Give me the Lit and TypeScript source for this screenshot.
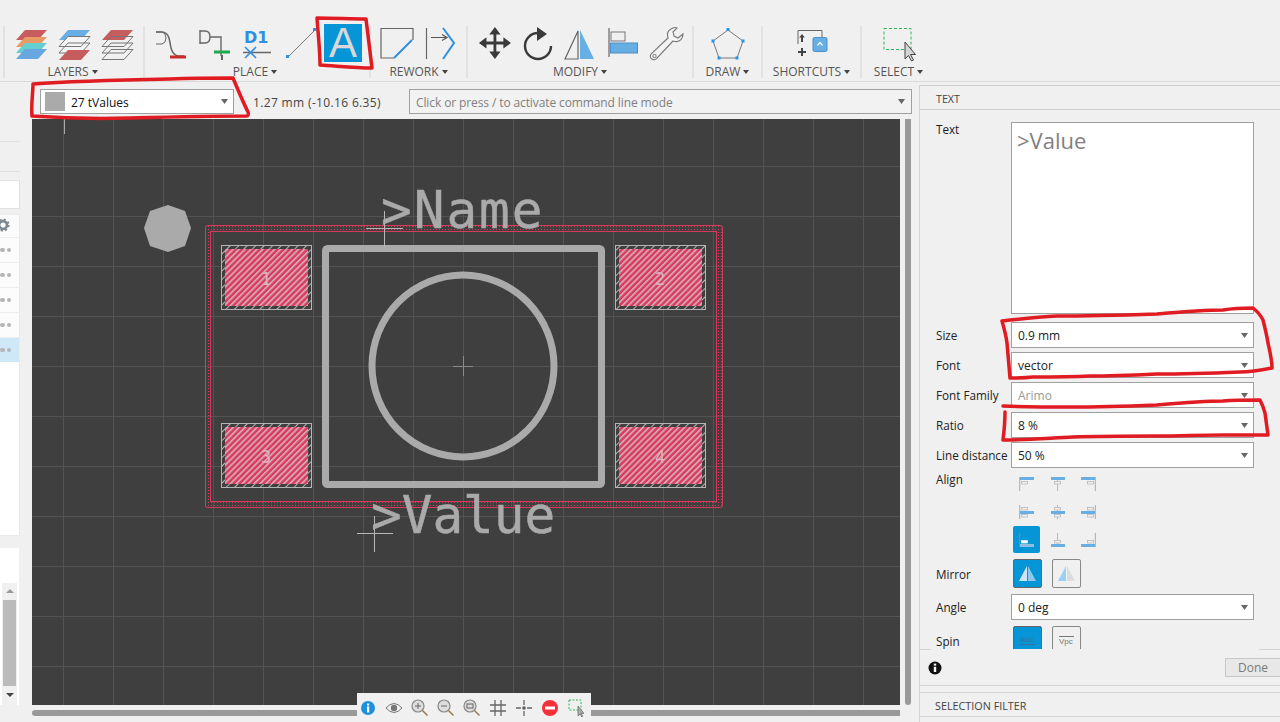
import { LitElement, html, css, svg } from "lit";
import { customElement } from "lit/decorators.js";

const B = "#66aee4";
const icons: Record<string, any> = {
  l1: svg`<svg width="36" height="34" viewBox="0 0 36 34"><g transform="translate(3 -4)"><path d="M9 6h22l-9 10H0z" fill="#c65c5e"/><path d="M9 13h22l-9 10H0z" fill="#e79a63"/><path d="M9 19h22l-9 10H0z" fill="#66cdd0"/><path d="M9 25h22l-9 10H0z" fill="#67a6de"/></g></svg>`,
  l2: svg`<svg width="36" height="34" viewBox="0 0 36 34"><g transform="translate(3 -4)"><path d="M9 6h22l-9 10H0z" fill="#67aee4"/><path d="M9 12.500h22l-9 10H0zM9 19h22l-9 10H0z" fill="#f4f4f4" stroke="#777"/><path d="M9 26h22l-9 10H0z" fill="#c65c5e"/></g></svg>`,
  l3: svg`<svg width="36" height="34" viewBox="0 0 36 34"><g transform="translate(3 -4)"><path d="M9 6h22l-9 10H0z" fill="#c65c5e"/><path d="M9 12.500h22l-9 10H0zM9 19h22l-9 10H0zM9 25.500h22l-9 10H0z" fill="none" stroke="#777"/></g></svg>`,
  wire: svg`<svg width="36" height="34" viewBox="0 0 36 34"><path d="M3 4h6q5 0 7 6q1 4 2 10q2 7 7 8h6" fill="none" stroke="#666" stroke-width="1.500"/><path d="M3 4h6q4 1 4 6t-4 6H3" fill="none" stroke="#666"/><path d="M17 29h16" stroke="#cc2b2b" stroke-width="3"/></svg>`,
  net: svg`<svg width="36" height="34" viewBox="0 0 36 34"><path d="M4 2v14M4 3h5q5 0 5 6t-5 6H4M14 9h11v19" fill="none" stroke="#666" stroke-width="1.400"/><path d="M18 24h16" stroke="#1fa84f" stroke-width="3"/><path d="M26 27v5" stroke="#666" stroke-width="2"/></svg>`,
  dv: svg`<svg width="36" height="34" viewBox="0 0 36 34"><path d="M4 24.500h28" stroke="#666" stroke-width="1.500"/><path d="M6 19l11 11M17 19L6 30" stroke="#2f8fe0" stroke-width="1.600"/><text x="5" y="15" fill="#2f8fe0" font-family="'DejaVu Sans',sans-serif" font-weight="700" font-size="16">D1</text></svg>`,
  line: svg`<svg width="36" height="34" viewBox="0 0 36 34"><path d="M6 29L32 3" stroke="#777" stroke-width="1"/><rect x="4" y="27" width="3" height="3" fill="#2f8fe0"/><rect x="31" y="0" width="3" height="3" fill="#2f8fe0"/></svg>`,
  a: html`<div class="a-btn">A</div>`,
  rw1: svg`<svg width="36" height="34" viewBox="0 0 36 34"><path d="M15 30H2V0.500h32V12" fill="none" stroke="#666" stroke-width="1.200"/><path d="M15 30l18-18" fill="none" stroke="#2f8fe0" stroke-width="2"/></svg>`,
  rw2: svg`<svg width="36" height="34" viewBox="0 0 36 34"><path d="M4.500 0v31" stroke="#666" stroke-width="1.200"/><path d="M9 9.500h15M20 6.500l5 3-5 3" fill="none" stroke="#555" stroke-width="1.200"/><path d="M21 0l11 15-11 16" fill="none" stroke="#2f8fe0" stroke-width="2"/></svg>`,
  move: svg`<svg width="36" height="34" viewBox="0 0 36 34"><path transform="translate(2 -1) scale(.94)" d="M18 0l6 8h-4.500v7.500H27V11l8 6-8 6v-4.500h-7.500V26H24l-6 8-6-8h4.500v-7.500H9V23l-8-6 8-6v4.500h7.500V8H12z" fill="#3a3a3a"/></svg>`,
  rot: svg`<svg width="36" height="34" viewBox="0 0 36 34"><path d="M19 5A13 13 0 1 0 32 18" fill="none" stroke="#3a3a3a" stroke-width="2.400"/><path d="M17 -2l10 7-10 7z" fill="#3a3a3a" transform="translate(1 1)"/></svg>`,
  mir: svg`<svg width="36" height="34" viewBox="0 0 36 34"><path d="M16 3L3 31h13z" fill="none" stroke="#666" stroke-width="1.200"/><path d="M18 2v29h14z" fill="${B}"/></svg>`,
  ali: svg`<svg width="36" height="34" viewBox="0 0 36 34"><path d="M4 0v29" stroke="#666" stroke-width="1.200"/><rect x="6" y="4" width="14" height="9" fill="none" stroke="#777"/><rect x="5.500" y="15" width="27" height="10" fill="${B}" stroke="#4a8fc7"/></svg>`,
  wr: svg`<svg width="36" height="34" viewBox="0 0 36 34"><path d="M23 1q-5 3-3 9L3 26q-2 3 1 5t5-1l16-17q6 2 9-3q1-2 1-4l-5 4-4-2-1-4 4-4q-2-1-4 0z" fill="#f4f4f4" stroke="#777" stroke-width="1.100"/><circle cx="6.500" cy="28" r="1.700" fill="none" stroke="#777"/></svg>`,
  pen: svg`<svg width="36" height="34" viewBox="0 0 36 34"><path d="M18 2L33 13l-6 17H9L3 13z" fill="none" stroke="#777" stroke-width="1"/><g fill="#1f96ea"><rect x="16.500" y="0" width="3" height="3"/><rect x="31.500" y="11.500" width="3" height="3"/><rect x="1.500" y="11.500" width="3" height="3"/><rect x="7.500" y="28.500" width="3" height="3"/><rect x="25.500" y="28.500" width="3" height="3"/></g></svg>`,
  sc: svg`<svg width="36" height="34" viewBox="0 0 36 34"><path d="M28 9V2.500H4V16" fill="none" stroke="#666"/><path d="M8 6l-2.800 3.500h1.800V14h2V9.500h1.800z" fill="#444"/><rect x="19" y="9.500" width="14" height="14" rx="1.500" fill="${B}" stroke="#4a8fc7"/><path d="M23.500 17.500l2.500-3 2.500 3" fill="none" stroke="#fff" stroke-width="1.200"/><path d="M8 20v8M4 24h8" stroke="#444" stroke-width="2"/></svg>`,
  sel: svg`<svg width="36" height="34" viewBox="0 0 36 34"><rect x="3" y="0.500" width="27" height="21" fill="none" stroke="#2fb457" stroke-dasharray="3 2"/><path d="M24 14v17l3.500-3.500 3 5.500 2-1-3-5.500h5z" fill="#d5d5d5" stroke="#444" stroke-width="1"/></svg>`,
};

const groups = [
  { w: 140, lo: 3, label: "LAYERS", items: ["l1", "l2", "l3"] },
  { w: 226, lo: 4, label: "PLACE", items: ["wire", "net", "dv", "line", "a"] },
  { w: 97, lo: 0, label: "REWORK", items: ["rw1", "rw2"] },
  { w: 226, lo: 0, label: "MODIFY", items: ["move", "rot", "mir", "ali", "wr"] },
  { w: 69, lo: 0, label: "DRAW", items: ["pen"] },
  { w: 99, lo: 0, label: "SHORTCUTS", items: ["sc"] },
  { w: 75, lo: 0, label: "SELECT", items: ["sel"] },
];

const gridX = Array.from({ length: 18 }, (_, i) => 63 + i * 50);
const gridY = Array.from({ length: 12 }, (_, i) => 166 + i * 50);

const pads = [
  { x: 222, y: 246, n: "1" },
  { x: 616, y: 246, n: "2" },
  { x: 222, y: 424, n: "3" },
  { x: 616, y: 424, n: "4" },
];

function board() {
  return svg`
  <svg class="board" width="868" height="586" viewBox="32 119 868 586">
    <defs>
      <pattern id="pad" width="4.200" height="4.200" patternUnits="userSpaceOnUse" patternTransform="rotate(-45)">
        <rect width="4.200" height="4.200" fill="#d83a5e"/><rect width="4.200" height="1.900" fill="#d9a2b0"/>
      </pattern>
      <pattern id="halo" width="6" height="6" patternUnits="userSpaceOnUse" patternTransform="rotate(-45)">
        <rect width="6" height="1" fill="#b5b5b5"/>
      </pattern>
      <pattern id="dots" width="3" height="3" patternUnits="userSpaceOnUse">
        <rect width="1" height="1" x="1" y="1" fill="#d83a5e"/>
      </pattern>
    </defs>
    <rect x="32" y="119" width="868" height="586" fill="#3f3f3f"/>
    ${gridX.map((x) => svg`<path d="M${x + 0.5} 119V705" stroke="#535353" />`)}
    ${gridY.map((y) => svg`<path d="M32 ${y + 0.5}H900" stroke="#535353" />`)}
    <path d="M64.500 119v15" stroke="#aaa"/>
    <polygon points="168,205 185,211 191,228 185,246 168,252 150,246 144,228 150,211" fill="#aaa"/>
    <path d="M205.500 225.500H722.500V507.500H205.500Z M210.500 231.500V501.500H716.500V231.500Z" fill="url(#dots)"/>
    <rect x="205.500" y="225.500" width="517" height="282" rx="2" fill="none" stroke="#d83a5e"/>
    <rect x="210.500" y="231.500" width="506" height="270" fill="none" stroke="#d83a5e"/>
    ${pads.map(
      (p) => svg`
      <rect x="${p.x - 0.5}" y="${p.y - 0.5}" width="90" height="64" fill="url(#halo)" stroke="#b5b5b5"/>
      <rect x="${p.x + 3}" y="${p.y + 3}" width="83" height="57" fill="url(#pad)"/>
      <text x="${p.x + 44}" y="${p.y + 39}" text-anchor="middle" fill="#dcb2bc" font-family="'DejaVu Sans Mono',monospace" font-size="17">${p.n}</text>`
    )}
    <rect x="325.500" y="248.500" width="276" height="236" rx="2" fill="none" stroke="#aaa" stroke-width="7"/>
    <circle cx="463" cy="366" r="91" fill="none" stroke="#aaa" stroke-width="7"/>
    <path d="M463.500 356v20M453 366.500h20" stroke="#8a8a8a"/>
    <path d="M384.500 211v36M366 228.500h37M374.500 516v36M357 533.500h36" stroke="#b8b8b8"/>
    <text class="vec name" x="381" y="228">&gt;Name</text>
    <text class="vec" x="371" y="533">&gt;Value</text>
  </svg>`;
}

function caret() {
  return svg`<svg class="caret" width="7" height="5" viewBox="0 0 7 5"><path d="M0 0h7L3.500 5z" fill="#666"/></svg>`;
}

const alignIcon = (v: number, h: number, on = false) => {
  const c = on ? "#5f8fb4" : "#b9b9b9";
  const vx = h === 0 ? 0.5 : h === 1 ? 7.5 : 14.5;
  const barX = h === 2 ? 0 : 1;
  const boxX = h === 0 ? 2.5 : h === 1 ? 4.5 : 6.5;
  const barY = v === 0 ? 0 : v === 1 ? 6 : 11;
  const boxes = v === 0 ? [4.5] : v === 1 ? [2.5, 9.5] : [7.5];
  return svg`<svg width="15" height="14" viewBox="0 0 15 14">
    <path d="M${vx} 0v14" stroke="${c}" stroke-width="${h === 1 ? 1 : 1.5}"/>
    ${boxes.map((y) => svg`<rect x="${boxX}" y="${y}" width="6" height="2.500" fill="${on ? "#fff" : "#f0f0f0"}" stroke="${on ? "#dfeaf3" : c}" stroke-width=".8"/>`)}
    <rect x="${barX}" y="${barY}" width="14" height="3" fill="${on ? "#8dbfe2" : "#66aee4"}"/>
  </svg>`;
};

const notes = [
  "M32 116C31 104 33 93 33 84C60 82 120 80 170 79C195 78 215 78 233 78C238 90 243 102 248 112C249 114 248 116 247 116C210 116 170 117 130 118C95 119 60 118 32 116Z",
  "M317 18C335 18 350 19 366 19C368 35 370 52 372 68C355 68 337 66 320 65C320 50 318 33 317 18Z",
  "M1002 321C1020 319 1040 317 1057 316C1090 316 1125 315 1157 314C1180 312 1205 310 1223 310C1235 308 1245 308 1253 308C1258 312 1261 316 1263 320C1265 328 1267 336 1268 343C1270 352 1272 360 1272 368C1262 370 1250 372 1240 372C1215 373 1185 374 1157 374C1135 375 1110 376 1090 376C1070 377 1050 377 1033 377C1025 378 1017 378 1010 378C1009 366 1008 354 1007 343C1006 335 1004 328 1002 321Z",
  "M1003 406C1025 407 1050 407 1073 407C1100 407 1130 406 1157 405C1180 403 1205 401 1223 401C1235 400 1250 400 1260 400C1262 404 1264 409 1265 413C1266 420 1267 428 1268 435C1255 435 1240 435 1223 435C1200 435 1180 436 1157 436C1130 436 1100 436 1073 437C1050 438 1025 440 1003 440M1005 412C1005 422 1004 432 1003 440",
];

const floats = [
  svg`<svg width="16" height="16" viewBox="0 0 16 16"><circle cx="8" cy="8" r="7" fill="#1f8fe0"/><rect x="7" y="6.500" width="2.200" height="6" fill="#fff"/><rect x="7" y="3.500" width="2.200" height="2" fill="#fff"/></svg>`,
  svg`<svg width="18" height="12" viewBox="0 0 18 12"><path d="M1 6q8-9 16 0q-8 9-16 0z" fill="#f4f4f4" stroke="#777"/><circle cx="9" cy="6" r="3.200" fill="#777"/></svg>`,
  svg`<svg width="18" height="18" viewBox="0 0 18 18"><circle cx="7" cy="7" r="6" fill="#ddd" stroke="#888" stroke-width="1.200"/><path d="M4 7h6M7 4v6" stroke="#666"/><path d="M11.500 11.500l5 5" stroke="#9a7a50" stroke-width="1.500"/></svg>`,
  svg`<svg width="18" height="18" viewBox="0 0 18 18"><circle cx="7" cy="7" r="6" fill="#ddd" stroke="#888" stroke-width="1.200"/><path d="M4 7h6" stroke="#666"/><path d="M11.500 11.500l5 5" stroke="#9a7a50" stroke-width="1.500"/></svg>`,
  svg`<svg width="18" height="18" viewBox="0 0 18 18"><circle cx="7" cy="7" r="6" fill="#ddd" stroke="#888" stroke-width="1.200"/><rect x="4" y="5" width="6" height="4" fill="none" stroke="#666"/><path d="M11.500 11.500l5 5" stroke="#9a7a50" stroke-width="1.500"/></svg>`,
  svg`<svg width="16" height="16" viewBox="0 0 16 16"><path d="M5 0v16M11 0v16M0 5h16M0 11h16" stroke="#666" stroke-width="1.300"/></svg>`,
  svg`<svg width="16" height="16" viewBox="0 0 16 16"><path d="M8 0v5M8 11v5M0 8h5M11 8h5" stroke="#666" stroke-width="1.300"/><rect x="6.500" y="6.500" width="3" height="3" fill="#555"/></svg>`,
  svg`<svg width="16" height="16" viewBox="0 0 16 16"><circle cx="8" cy="8" r="8" fill="#f4313b"/><rect x="3" y="6.500" width="10" height="3" fill="#fff"/></svg>`,
  svg`<svg width="16" height="18" viewBox="0 0 16 18"><rect x="1" y="1" width="12" height="10" fill="none" stroke="#2fb457" stroke-dasharray="2 1.500"/><path d="M10 7v10l2.200-2 1.500 3 1-.6-1.500-3h2.800z" fill="#aaa" stroke="#555" stroke-width=".6"/></svg>`,
];

@customElement("app-root")
export class AppRoot extends LitElement {
  static styles = css`
    :host { display: block; width: 1280px; height: 722px; position: relative; overflow: hidden; background: #f0f0f0; font-family: "Open Sans", "Liberation Sans", sans-serif; font-size: 12px; color: #222; }
    .toolbar { height: 81px; display: flex; align-items: flex-start; padding-left: 3px; border-bottom: 1px solid #d9d9d9; box-sizing: content-box; }
    .group { height: 52px; margin-top: 26px; border-left: 2px solid #e2e2e2; box-sizing: border-box; display: flex; flex-direction: column; align-items: center; }
    .icons { display: flex; flex: none; height: 38px; align-items: flex-start; padding-top: 2px; box-sizing: border-box; }
    .cell { width: 43px; display: flex; justify-content: center; }
    .cell svg { display: block; overflow: visible; }
    .a-btn { width: 38px; height: 38px; margin-top: -4px; background: #0696d7; color: #d8d8d8; font: 400 42px/38px "Liberation Sans", sans-serif; text-align: center; }
    .glabel { flex: none; margin-top: 1px; font-size: 12px; line-height: 14px; color: #555; display: flex; align-items: center; gap: 3px; }
    .glabel .tri { width: 0; height: 0; border-left: 3.5px solid transparent; border-right: 3.5px solid transparent; border-top: 4px solid #444; }

    .main { display: flex; height: 640px; }
    .left { width: 32px; flex: none; box-sizing: border-box; padding-top: 59px; display: flex; flex-direction: column; }
    .l-rule { height: 1px; width: 20px; background: #e2e2e2; margin-bottom: 29px; }
    .l-box { width: 20px; height: 29px; background: #fff; border: 1px solid #e2e2e2; border-left: 0; box-sizing: border-box; margin-top: -21px; }
    .l-list { width: 19px; height: 320px; margin-top: 6px; background: #fff; box-shadow: 0 0 1px #ccc; }
    .l-gear { height: 22px; position: relative; overflow: hidden; background: #fbfbfb; }
    .l-gear svg { position: absolute; left: -4px; top: 2px; }
    .l-row { height: 25px; box-sizing: border-box; border-top: 1px solid #eee; display: flex; justify-content: flex-end; align-items: center; gap: 2px; padding-right: 8px; background: #fcfcfc; }
    .l-row.hl { background: #cfe8f8; }
    .l-row i { width: 4.500px; height: 4.500px; border-radius: 50%; background: #b5b5b5; }
    .l-panel { width: 19px; height: 157px; margin-top: 13px; background: #fff; position: relative; }
    .sb { position: absolute; left: 2px; top: 35px; width: 15px; height: 122px; background: #f0f0f0; display: flex; flex-direction: column; align-items: center; }
    .sb .up { margin-top: 6px; border-left: 4px solid transparent; border-right: 4px solid transparent; border-bottom: 4px solid #999; }
    .sb .th { width: 13px; height: 86px; background: #bbb; margin-top: 7px; }
    .sb .dn { margin-top: 7px; border-left: 4px solid transparent; border-right: 4px solid transparent; border-top: 4px solid #444; }

    .center { width: 887px; flex: none; display: flex; flex-direction: column; position: relative; }
    .cmdbar { height: 37px; display: flex; align-items: center; padding-top: 2px; box-sizing: border-box; }
    .layer { margin-left: 8px; width: 194px; height: 25px; box-sizing: border-box; background: #fff; border: 1px solid #a0a0a0; display: flex; align-items: center; padding: 0 5px 0 4px; }
    .sw { width: 20px; height: 19px; background: #aaa; margin-right: 6px; }
    .layer span { flex: 1; color: #111; padding-top: 2px; }
    .caret { flex: none; }
    .coords { margin-left: 19px; width: 156px; color: #444; white-space: nowrap; letter-spacing: .35px; padding-top: 2px; }
    .cmd { width: 503px; height: 25px; box-sizing: border-box; background: #f2f2f2; border: 1px solid #a0a0a0; display: flex; align-items: center; padding: 0 6px; color: #808080; }
    .cmd span { flex: 1; letter-spacing: -.11px; padding-top: 2px; }
    .cv { display: flex; height: 586px; }
    .board { display: block; flex: none; }
    .vec { font-family: "DejaVu Sans Mono", monospace; font-size: 51px; fill: #aaa; stroke: #aaa; stroke-width: .5px; }
    .vec.name { letter-spacing: 2px; }
    .vbar { width: 6px; height: 586px; margin-left: 5px; background: #999; border-radius: 0 0 3px 3px; }
    .hbar { height: 6px; width: 868px; background: #999; margin-top: 5px; border-radius: 3px 0 0 3px; }
    .float { position: absolute; left: 325px; top: 611px; width: 234px; height: 29px; background: #f0f0f0; }
    .fgrid { margin-left: -2px; height: 29px; display: grid; grid-template-columns: repeat(9, 26px); align-items: center; justify-items: center; }
    .fgrid svg { display: block; }

    .right { flex: 1; border-left: 1px solid #d4d4d4; margin-top: 3px; display: flex; flex-direction: column; position: relative; height: 637px; box-sizing: border-box; }
    .rh { height: 25px; flex: none; border-top: 1px solid #cfcfcf; border-bottom: 1px solid #cfcfcf; box-sizing: border-box; padding: 2px 0 0 16px; display: flex; align-items: center; font-size: 10.700px; color: #444; }
    .body { height: 539px; flex: none; overflow: hidden; padding: 12px 26px 0 16px; box-sizing: border-box; }
    .row { display: flex; align-items: center; height: 26px; margin-bottom: 4px; }
    .lab { width: 75px; flex: none; color: #222; white-space: nowrap; font-size: 11.700px; }
    .sel { flex: 1; height: 26px; background: #fff; box-sizing: border-box; border: 1px solid #a0a0a0; display: flex; align-items: center; padding: 0 5px 0 6px; color: #222; }
    .sel span { flex: 1; }
    .sel.dis { color: #9a9a9a; }
    .row.ta { height: 192px; align-items: flex-start; margin-bottom: 8px; }
    .row.ta .lab { margin-top: -1px; }
    .ta-box { flex: 1; height: 192px; box-sizing: border-box; background: #fff; border: 1px solid #a0a0a0; padding: 3px 5px; color: #808080; font-size: 22px; line-height: 28px; }
    .al { display: grid; grid-template-columns: 27px 27px 27px; column-gap: 4px; row-gap: 1px; margin-left: 2px; }
    .al div { width: 27px; height: 27px; display: flex; align-items: center; justify-content: center; border-radius: 2px; }
    .al div.on { background: #0696d7; }
    .alrow { display: flex; align-items: flex-start; height: 84px; margin-bottom: 5px; margin-top: -2px; }
    .alrow .lab { margin-top: 1px; }
    .tg { display: flex; gap: 10px; margin-left: 2px; }
    .tg div { width: 29px; height: 29px; box-sizing: border-box; border: 1px solid #888; border-radius: 2px; display: flex; align-items: center; justify-content: center; }
    .tg div.on { background: #0696d7; border-color: #666; }
    .row.tgl { height: 29px; margin-bottom: 6px; }
    .row.ang { margin-bottom: 6px; }
    .row.spin { height: 29px; align-items: flex-start; }
    .row.spin .lab { margin-top: 7px; }
    .frule { height: 1px; flex: none; display: flex; justify-content: space-between; }
    .frule i { height: 1px; background: #d4d4d4; }
    .frule i.a { width: 11px; }
    .frule i.b { width: 21px; }
    .foot { height: 35px; flex: none; display: flex; align-items: center; justify-content: space-between; padding-left: 8px; }
    .done { width: 55px; height: 19px; box-sizing: border-box; background: #e8e8e8; border: 1px solid #c8c8c8; border-right: 0; color: #7a7a7a; display: flex; align-items: center; justify-content: center; margin-top: -1px; }
    .filter { margin-top: 6px; height: 25px; border-top: 1px solid #d4d4d4; border-bottom: 1px solid #d4d4d4; box-sizing: border-box; padding: 2px 0 0 15px; display: flex; align-items: center; font-size: 10.800px; color: #444; }
    .rule2 { height: 1px; background: #d4d4d4; }
    .notes { position: absolute; left: 0; top: 0; pointer-events: none; }
  `;

  render() {
    return html`
      <div class="toolbar">
        ${groups.map(
          (g) => html`<div class="group" style="width:${g.w}px">
            <div class="icons">${g.items.map((i) => html`<div class="cell">${icons[i]}</div>`)}</div>
            <div class="glabel" style="margin-right:${g.lo}px">${g.label}<span class="tri"></span></div>
          </div>`
        )}
      </div>
      <div class="main">
        <div class="left">
          <div class="l-rule"></div>
          <div class="l-rule"></div>
          <div class="l-box"></div>
          <div class="l-list">
            <div class="l-gear"><svg width="14" height="16" viewBox="0 0 16 16"><circle cx="8" cy="8" r="4.500" fill="none" stroke="#7c8790" stroke-width="3"/><circle cx="8" cy="8" r="6.500" fill="none" stroke="#7c8790" stroke-width="2" stroke-dasharray="2.500 2.600"/></svg></div>
            ${[0, 1, 2, 3, 4].map((i) => html`<div class="l-row ${i === 4 ? "hl" : ""}"><i></i><i></i></div>`)}
          </div>
          <div class="l-panel">
            <div class="sb"><div class="up"></div><div class="th"></div><div class="dn"></div></div>
          </div>
        </div>
        <div class="center">
          <div class="cmdbar">
            <div class="layer"><div class="sw"></div><span>27 tValues</span>${caret()}</div>
            <div class="coords">1.27 mm (-10.16 6.35)</div>
            <div class="cmd"><span>Click or press / to activate command line mode</span>${caret()}</div>
          </div>
          <div class="cv">${board()}<div class="vbar"></div></div>
          <div class="hbar"></div>
          <div class="float"><div class="fgrid">${floats}</div></div>
        </div>
        <div class="right">
          <div class="rh">TEXT</div>
          <div class="body">
            <div class="row ta"><div class="lab">Text</div><div class="ta-box">&gt;Value</div></div>
            <div class="row"><div class="lab">Size</div><div class="sel"><span>0.9 mm</span>${caret()}</div></div>
            <div class="row"><div class="lab">Font</div><div class="sel"><span>vector</span>${caret()}</div></div>
            <div class="row"><div class="lab">Font Family</div><div class="sel dis"><span>Arimo</span>${caret()}</div></div>
            <div class="row"><div class="lab">Ratio</div><div class="sel"><span>8 %</span>${caret()}</div></div>
            <div class="row"><div class="lab">Line distance</div><div class="sel"><span>50 %</span>${caret()}</div></div>
            <div class="alrow"><div class="lab">Align</div>
              <div class="al">
                ${[0, 1, 2].flatMap((v) =>
                  [0, 1, 2].map((h) => html`<div class="${v === 2 && h === 0 ? "on" : ""}">${alignIcon(v, h, v === 2 && h === 0)}</div>`)
                )}
              </div>
            </div>
            <div class="row tgl"><div class="lab">Mirror</div>
              <div class="tg">
                <div class="on"><svg width="17" height="15" viewBox="0 0 17 15"><path d="M8 0v15H0z" fill="#cfe4f2"/><path d="M9 0v15h8z" fill="#8cc8f0"/></svg></div>
                <div><svg width="17" height="15" viewBox="0 0 17 15"><path d="M8 0v15H0z" fill="#9ad0f5"/><path d="M9 0v15h8z" fill="#dcdcdc"/></svg></div>
              </div>
            </div>
            <div class="row ang"><div class="lab">Angle</div><div class="sel"><span>0 deg</span>${caret()}</div></div>
            <div class="row spin"><div class="lab">Spin</div>
              <div class="tg">
                <div class="on"><svg width="17" height="15" viewBox="0 0 17 15"><text x="1" y="9" font-size="8" fill="#35739f" font-family="Liberation Sans,sans-serif">Abc</text><path d="M1 11.500h15" stroke="#35739f"/></svg></div>
                <div><svg width="17" height="15" viewBox="0 0 17 15"><text x="1" y="11" font-size="8" fill="#777" font-family="Liberation Sans,sans-serif">Vpc</text><path d="M1 3.500h15" stroke="#777"/></svg></div>
              </div>
            </div>
          </div>
          <div class="frule"><i class="a"></i><i class="b"></i></div>
          <div class="foot">
            <svg width="14" height="14" viewBox="0 0 14 14"><circle cx="7" cy="7" r="6.500" fill="#111"/><rect x="5.800" y="5.800" width="2.400" height="5.200" fill="#fff"/><rect x="5.800" y="2.600" width="2.400" height="2" fill="#fff"/></svg>
            <div class="done">Done</div>
          </div>
          <div class="rule2"></div>
          <div class="filter">SELECTION FILTER</div>
        </div>
      </div>
      <svg class="notes" width="1280" height="722" viewBox="0 0 1280 722">
        ${notes.map((d) => svg`<path d=${d} fill="none" stroke="#e01b22" stroke-width="3.500" stroke-linejoin="round" stroke-linecap="round"/>`)}
      </svg>
    `;
  }
}
